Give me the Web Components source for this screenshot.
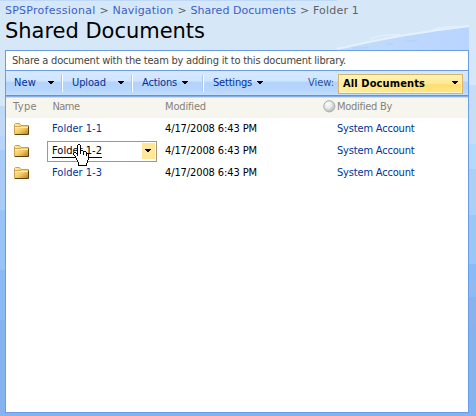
<!DOCTYPE html>
<html lang="en"><head><meta charset="utf-8"><title>Shared Documents</title>
<style>
html,body{margin:0;width:476px;height:416px;overflow:hidden}
</style></head><body>
<doc-page></doc-page>
<script>
const define=(name,html,setup)=>customElements.define(name,class extends HTMLElement{
  connectedCallback(){
    if(this.shadowRoot)return;
    const t=document.createElement('template');t.innerHTML=html;
    this.attachShadow({mode:'open'}).append(t.content.cloneNode(true));
    if(setup)setup.call(this,this.shadowRoot);
  }
});

/* Single line label whose letter spacing is tuned to a given width (attribute w). */
define('fit-text','<style>:host{display:inline-block;white-space:pre;flex:none}span{display:inline-block}</style><span><slot></slot></span>',function(r){
  const w=+this.getAttribute('w'),s=r.querySelector('span');
  this.style.width=w+'px';
  const n=this.textContent.length;
  s.style.letterSpacing=((w-s.getBoundingClientRect().width)/n)+'px';
});

define('drop-arrow','<style>:host{display:block;width:7px;height:4px;flex:none}svg{display:block}</style><svg width="7" height="4" shape-rendering="crispEdges"><path d="M0 0h6v1h-6zM1 1h4v1h-4zM2 2h2v1h-2z" fill="#000"/></svg>');

define('folder-icon',`<style>:host{display:block;width:16px;height:14px}svg{display:block}</style>
<svg width="16" height="14"><defs><linearGradient id="g" x2="1" y2="1"><stop offset="0" stop-color="#fff3ac"/><stop offset=".55" stop-color="#f3c968"/><stop offset="1" stop-color="#bd7910"/></linearGradient></defs>
<path d="M.5 11.500V1.500L1.500.5H5.500L7 2.500H14.500V11.500H.5z" fill="url(#g)" stroke="#c9a04c"/><path d="M1 4.500h13" stroke="#fff3b5"/><path d="M1 3.500h6" stroke="#dba84b"/><path d="M14.500 3.500v8H1" fill="none" stroke="#5c4314"/></svg>`);

define('presence-icon',`<style>:host{display:block;width:13px;height:13px}svg{display:block}</style>
<svg width="13" height="13"><defs><radialGradient id="b" cx=".36" cy=".3" r=".75"><stop offset="0" stop-color="#fff"/><stop offset=".5" stop-color="#dfe3e3"/><stop offset="1" stop-color="#b1b8ba"/></radialGradient></defs><circle cx="6.300" cy="6.300" r="5.600" fill="url(#b)" stroke="#a9adae"/><path d="M3 8l5-5M5 9l4-4" stroke="#fff" opacity=".6"/></svg>`);

define('hand-cursor',`<style>:host{display:block;width:17px;height:23px}svg{display:block}</style>
<svg width="17" height="23" shape-rendering="crispEdges"><path d="M5 1h2v6h2v1h3v1h2v1h1v1h1v6h-1v3h-1v2H6v-3H5v-2H4v-2H3v-2H2v-2H1V9h3v1h1z" fill="#fff"/>
<path d="M5 0h2v1h-2zM4 1h1v9h-1zM7 1h1v9h-1zM8 6h2v1h-2zM10 7h1v4h-1zM11 7h2v1h-2zM13 8h1v4h-1zM14 9h1v1h-1zM15 10h1v6h-1zM14 16h1v3h-1zM13 19h1v3h-1zM5 21h9v1h-9zM5 18h1v4h-1zM4 16h1v2h-1zM3 14h1v2h-1zM2 12h1v2h-1zM1 11h1v1h-1zM0 9h1v2h-1zM1 8h2v1h-2zM3 9h1v1h-1zM4 10h1v2h-1z" fill="#000"/></svg>`);

define('page-backdrop',`<style>:host{position:absolute;inset:0;display:block;background:#d6e7f7}svg{display:block}</style>
<svg width="476" height="416"><defs>
<linearGradient id="s" x1="0" x2="1"><stop offset="0" stop-color="#c2ddfa"/><stop offset="1" stop-color="#b9d4ff"/></linearGradient>
</defs>
<path d="M0 0h337v1H0z" fill="#bfdaf8"/>
<path d="M337 50Q400 34 469 27V50z" fill="url(#s)"/><path d="M337 49Q400 34 469 26" fill="none" stroke="#e5f1ff" stroke-width="2"/><path d="M370 39l8-3 12-1M385 36l15-2M433 29l12-2 22-1" stroke="#e0efff" stroke-width="1.500" fill="none"/>
<path d="M352 48h17M387 44h6M405 41h12" stroke="#abd1fa"/>
<g shape-rendering="crispEdges"><path d="M0 106h5v30H0z" fill="#bfd9f7"/><path d="M0 136h5v14H0z" fill="#b6d5f8"/><path d="M0 150h5v60H0z" fill="#a9ccf6"/><path d="M0 210h5v60H0z" fill="#98c3f7"/><path d="M0 270h5v50H0z" fill="#8ab9f3"/><path d="M0 320h5v96H0z" fill="#84b3ef"/>
<path d="M469 85h7v59h-7z" fill="#c6dcf7"/><path d="M469 144h7v25h-7z" fill="#b5d8ff"/><path d="M469 169h7v46h-7z" fill="#adcef7"/><path d="M469 215h7v49h-7z" fill="#9cc6f7"/><path d="M469 264h7v17h-7z" fill="#89bbf8"/><path d="M469 281h7v10h-7z" fill="#93b9ed"/><path d="M469 291h7v6h-7z" fill="#89bbf8"/><path d="M469 297h7v28h-7z" fill="#8bb2ed"/><path d="M469 325h7v91h-7zM5 413h471v3H5z" fill="#84b3ef"/></g></svg>`);

define('bread-crumb',`<style>:host{display:flex;height:13px;padding-left:5px;font:11px/13px "DejaVu Sans",sans-serif;color:#5d6267}a{color:#3962c6}i{font-style:normal;width:17px;text-align:center}</style>
<a><fit-text w="90.500">SPSProfessional</fit-text></a><i>&gt;</i><a><fit-text w="61">Navigation</fit-text></a><i>&gt;</i><a><fit-text w="105.500">Shared Documents</fit-text></a><i>&gt;</i><fit-text w="46">Folder 1</fit-text>`);

define('menu-button',`<style>:host{display:flex;align-items:center;height:17px;box-sizing:border-box;border-right:1px solid #fff;box-shadow:inset -1px 0 #a8c7f2}:host([last]){border:0;box-shadow:none}drop-arrow{margin-left:var(--gap,6px);margin-top:-1px}</style><slot></slot><drop-arrow></drop-arrow>`);

define('tool-bar',`<style>:host{display:flex;align-items:center;height:24px;box-sizing:border-box;color:#00309c;background:linear-gradient(#d7e9ff 0,#cfe4ff 42%,#b2d3fb 46%,#b5d5fc 75%,#c3dfff 100%)}
menu-button{padding-left:9px}.view{margin-left:auto;margin-right:4px;color:#2b52a0}
.pick{box-sizing:border-box;width:125px;height:20px;margin-top:1px;border:1px solid #d8b36f;display:flex;align-items:center;justify-content:space-between;padding:0 3px 0 4px;background:linear-gradient(90deg,#fff3b4aa,#fff3b400 60%),linear-gradient(#fff3b4,#ffe993 48%,#ffde72 54%,#ffe783);color:#000;font-weight:700;box-shadow:inset 0 0 0 1px #fff4c6}
drop-arrow{margin-top:-1px}.end{width:5px}</style>
<menu-button style="width:57px;padding-left:8px;--gap:12px"><fit-text w="22">New</fit-text></menu-button>
<menu-button style="width:70px;--gap:12px"><fit-text w="34">Upload</fit-text></menu-button>
<menu-button style="width:71px;--gap:5px"><fit-text w="35">Actions</fit-text></menu-button>
<menu-button last style="width:60px;padding-left:9px;--gap:5px"><fit-text w="39">Settings</fit-text></menu-button>
<span class="view"><fit-text w="26">View:</fit-text></span>
<div class="pick"><fit-text w="82">All Documents</fit-text><drop-arrow></drop-arrow></div><span class="end"></span>`);

define('doc-row',`<style>:host{display:grid;grid-template-columns:41px 118px 158px 14px 1fr;height:22px;align-items:center;color:#000;position:relative}
.name{height:21px;box-sizing:border-box;width:110px;padding:0 1px 0 4px;border:1px solid transparent;display:flex;align-items:center;justify-content:space-between;color:#003399}
.person{color:#003399}.pick{display:none;width:13px;height:16px;background:#ffe799;align-items:center;justify-content:center}
folder-icon{margin:2px 0 0 8px}hand-cursor{display:none}
:host([active]) .name{border-color:#ad9473;color:#000}:host([active]) .t{height:12px;line-height:12px;border-bottom:1px solid #000}
:host([active]) .pick{display:flex}:host([active]) hand-cursor{display:block;position:absolute;left:67px;top:4px}</style>
<folder-icon></folder-icon><div class="name"><fit-text class="t" w="50"></fit-text><span class="pick"><drop-arrow></drop-arrow></span></div>
<fit-text w="92">4/17/2008 6:43 PM</fit-text><span></span><span class="person"><fit-text w="77.500">System Account</fit-text></span><hand-cursor></hand-cursor>`,function(r){
  r.querySelector('.t').textContent=this.getAttribute('name');
  const s=r.querySelector('.t').shadowRoot.querySelector('span');
  s.style.letterSpacing='0';
  s.style.letterSpacing=((50-s.getBoundingClientRect().width)/10)+'px';
});

define('doc-list',`<style>:host{display:block}.head{height:20px;background:#f7f6ee;color:#84827b;display:grid;grid-template-columns:39.500px 112.500px 158px 14px 1fr;padding-left:7px;align-items:center;box-sizing:border-box}
presence-icon{margin-top:-3px}.head fit-text{margin-top:-3px}</style>
<div class="head"><fit-text w="24">Type</fit-text><fit-text w="27">Name</fit-text><fit-text w="41">Modified</fit-text><presence-icon></presence-icon><fit-text w="55">Modified By</fit-text></div>
<doc-row name="Folder 1-1"></doc-row><doc-row name="Folder 1-2" active></doc-row><doc-row name="Folder 1-3"></doc-row>`);

define('doc-page',`<style>:host{display:flex;flex-direction:column;position:relative;width:476px;height:416px;font:11px/14px "DejaVu Sans Condensed","DejaVu Sans",sans-serif}
bread-crumb,h1,main{position:relative}bread-crumb{margin-top:4px}
h1{margin:0 0 0 5px;height:33px;box-sizing:border-box;padding-top:1px;font:400 21px/27px "DejaVu Sans",sans-serif;color:#000}
main{margin-left:5px;width:464px;height:363px;box-sizing:border-box;border:1px solid #6b9de7;background:#fff}
.desc{height:20px;box-sizing:border-box;border-bottom:1px solid #6b9de7;padding:2px 0 0 6px;color:#444;line-height:16px}
.rule{height:3px;background:linear-gradient(#5f93df 0 1px,#8baee2 1px 2px,#d7dbe4 2px)}</style>
<page-backdrop></page-backdrop><bread-crumb></bread-crumb><h1><fit-text w="200">Shared Documents</fit-text></h1>
<main><div class="desc"><fit-text w="334">Share a document with the team by adding it to this document library.</fit-text></div><tool-bar></tool-bar><div class="rule"></div><doc-list></doc-list></main>`);
</script></body></html>
